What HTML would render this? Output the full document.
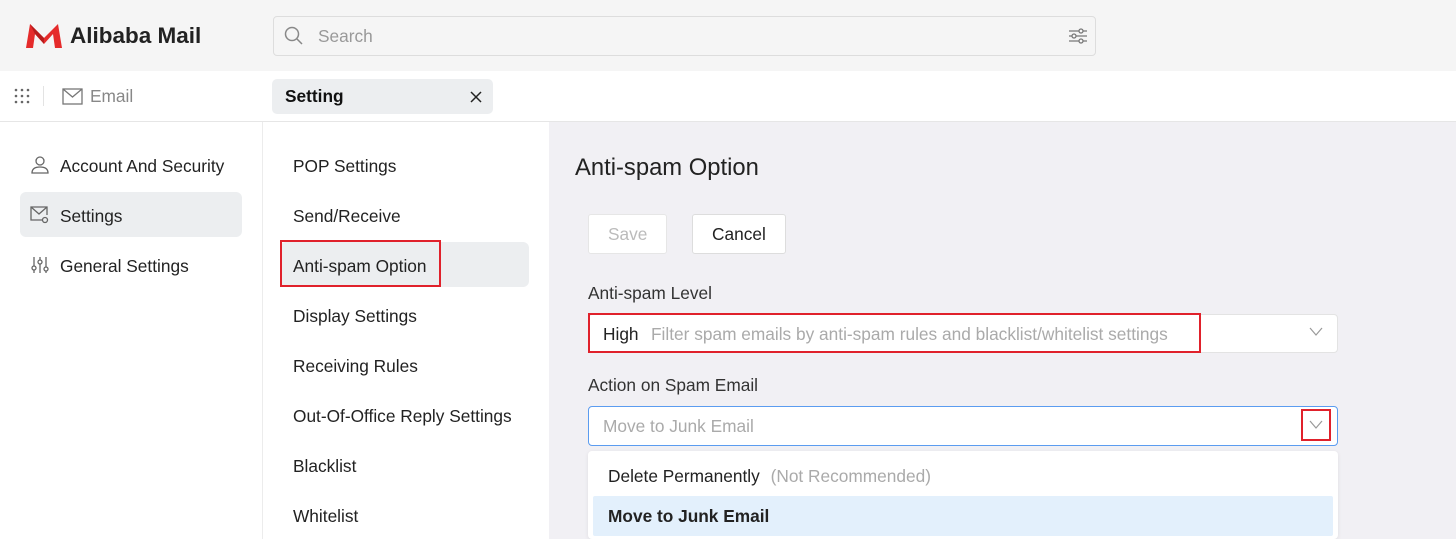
<!DOCTYPE html>
<html><head><meta charset="utf-8"><style>
*{box-sizing:border-box;margin:0;padding:0}
body{width:1456px;height:539px;overflow:hidden;background:#fff;font-family:"Liberation Sans",sans-serif;color:#222;position:relative}
.a{position:absolute}
.t{position:absolute;font-size:17.3px;white-space:nowrap}
</style></head><body>
<div class="a" style="left:0;top:0;width:1456px;height:71px;background:#f5f5f5"></div>
<svg class="a" style="left:24px;top:22px" width="40" height="28" viewBox="0 0 40 28"><path d="M2 26 L6 2 L20 16 L34 2 L38 26 L31 26 L29 12 L20 22 L11 12 L9 26 Z" fill="#e52b2b"/><path d="M6 2 L20 16 L20 22 L11 12 Z" fill="#b71c1c"/></svg>
<div class="t" style="left:70px;top:23px;font-size:22.5px;font-weight:bold;color:#222">Alibaba Mail</div>
<div class="a" style="left:273px;top:16px;width:823px;height:40px;border:1px solid #ddd;border-radius:4px;background:#f5f5f5"></div>
<svg class="a" style="left:284px;top:26px" width="20" height="20"><circle cx="8" cy="8" r="6.5" fill="none" stroke="#888" stroke-width="1.5"/><path d="M13 13 L18 18" stroke="#888" stroke-width="1.5"/></svg>
<div class="t" style="left:318px;top:26px;color:#999">Search</div>
<svg class="a" style="left:1068px;top:27px" width="20" height="18" stroke="#777" stroke-width="1.3"><path d="M1 4H19M1 9H19M1 14H19"/><circle cx="13" cy="4" r="2" fill="#f5f5f5"/><circle cx="6" cy="9" r="2" fill="#f5f5f5"/><circle cx="13" cy="14" r="2" fill="#f5f5f5"/></svg>
<svg class="a" style="left:14px;top:88px" width="16" height="16" fill="#666"><circle cx="2" cy="2" r="1.3"/><circle cx="8" cy="2" r="1.3"/><circle cx="14" cy="2" r="1.3"/><circle cx="2" cy="8" r="1.3"/><circle cx="8" cy="8" r="1.3"/><circle cx="14" cy="8" r="1.3"/><circle cx="2" cy="14" r="1.3"/><circle cx="8" cy="14" r="1.3"/><circle cx="14" cy="14" r="1.3"/></svg>
<div class="a" style="left:43px;top:86px;width:1px;height:20px;background:#e3e3e3"></div>
<svg class="a" style="left:62px;top:88px" width="21" height="17" fill="none" stroke="#777" stroke-width="1.3"><rect x="1" y="1" width="19" height="15"/><path d="M1 1 L10.5 9 L20 1"/></svg>
<div class="t" style="left:90px;top:86px;color:#888">Email</div>
<div class="a" style="left:272px;top:79px;width:221px;height:35px;background:#eceef0;border-radius:5px"></div>
<div class="t" style="left:285px;top:86px;font-weight:bold;color:#111">Setting</div>
<svg class="a" style="left:470px;top:91px" width="12" height="12" stroke="#222" stroke-width="1.5"><path d="M1 1L11 11M11 1L1 11"/></svg>
<div class="a" style="left:0;top:121px;width:1456px;height:1px;background:#e6e6e6"></div>
<div class="a" style="left:262px;top:122px;width:1px;height:417px;background:#ececec"></div>
<div class="a" style="left:549px;top:122px;width:907px;height:417px;background:#f1f0f4"></div>
<div class="a" style="left:20px;top:192px;width:222px;height:45px;background:#eceef0;border-radius:6px"></div>
<svg class="a" style="left:30px;top:155px" width="20" height="20" fill="none" stroke="#666" stroke-width="1.3"><circle cx="10" cy="6" r="4"/><path d="M2 18 Q2 12 10 12 Q18 12 18 18 Z"/></svg>
<div class="t" style="left:60px;top:156px">Account And Security</div>
<svg class="a" style="left:30px;top:206px" width="20" height="18" fill="none" stroke="#666" stroke-width="1.3"><path d="M13 14H1V1H17V9"/><path d="M1 1L9 8L17 1"/><circle cx="15" cy="14" r="2.5"/></svg>
<div class="t" style="left:60px;top:206px">Settings</div>
<svg class="a" style="left:31px;top:256px" width="18" height="18" fill="none" stroke="#666" stroke-width="1.3"><path d="M3 1V17M9 1V17M15 1V17"/><circle cx="3" cy="12" r="2" fill="#fff"/><circle cx="9" cy="6" r="2" fill="#fff"/><circle cx="15" cy="13" r="2" fill="#fff"/></svg>
<div class="t" style="left:60px;top:256px">General Settings</div>
<div class="a" style="left:280px;top:242px;width:249px;height:45px;background:#eceef0;border-radius:6px"></div>
<div class="a" style="left:280px;top:240px;width:161px;height:47px;border:2px solid #e0212b"></div>
<div class="t" style="left:293px;top:156px">POP Settings</div>
<div class="t" style="left:293px;top:206px">Send/Receive</div>
<div class="t" style="left:293px;top:256px">Anti-spam Option</div>
<div class="t" style="left:293px;top:306px">Display Settings</div>
<div class="t" style="left:293px;top:356px">Receiving Rules</div>
<div class="t" style="left:293px;top:406px">Out-Of-Office Reply Settings</div>
<div class="t" style="left:293px;top:456px">Blacklist</div>
<div class="t" style="left:293px;top:506px">Whitelist</div>
<div class="t" style="left:575px;top:154px;font-size:23.8px">Anti-spam Option</div>
<div class="a" style="left:588px;top:214px;width:79px;height:40px;background:#fff;border:1px solid #e6e6e6;border-radius:3px"></div>
<div class="t" style="left:608px;top:224px;color:#bbb">Save</div>
<div class="a" style="left:692px;top:214px;width:94px;height:40px;background:#fff;border:1px solid #ddd;border-radius:3px"></div>
<div class="t" style="left:712px;top:224px">Cancel</div>
<div class="t" style="left:588px;top:283px;color:#333">Anti-spam Level</div>
<div class="a" style="left:588px;top:314px;width:750px;height:39px;background:#fff;border:1px solid #e3e3e3;border-radius:4px"></div>
<div class="a" style="left:588px;top:313px;width:613px;height:40px;border:2px solid #e0212b"></div>
<div class="t" style="left:603px;top:324px">High</div>
<div class="t" style="left:651px;top:324px;color:#aaa">Filter spam emails by anti-spam rules and blacklist/whitelist settings</div>
<svg class="a" style="left:1309px;top:327px" width="14" height="10" fill="none" stroke="#999" stroke-width="1.2"><path d="M1 1L7 8L13 1"/></svg>
<div class="t" style="left:588px;top:375px;color:#333">Action on Spam Email</div>
<div class="a" style="left:588px;top:406px;width:750px;height:40px;background:#fff;border:1px solid #5b9cf0;border-radius:4px"></div>
<div class="t" style="left:603px;top:416px;color:#aaa">Move to Junk Email</div>
<div class="a" style="left:1301px;top:409px;width:30px;height:32px;border:2px solid #e0212b"></div>
<svg class="a" style="left:1309px;top:420px" width="14" height="10" fill="none" stroke="#999" stroke-width="1.2"><path d="M1 1L7 8L13 1"/></svg>
<div class="a" style="left:588px;top:451px;width:750px;height:88px;background:#fff;border-radius:4px;box-shadow:0 1px 4px rgba(0,0,0,.08)"></div>
<div class="t" style="left:608px;top:466px;color:#222">Delete Permanently <span style="color:#aaa;margin-left:6px">(Not Recommended)</span></div>
<div class="a" style="left:593px;top:496px;width:740px;height:40px;background:#e3f0fc;border-radius:2px"></div>
<div class="t" style="left:608px;top:506px;font-weight:bold;color:#222">Move to Junk Email</div>
</body></html>
